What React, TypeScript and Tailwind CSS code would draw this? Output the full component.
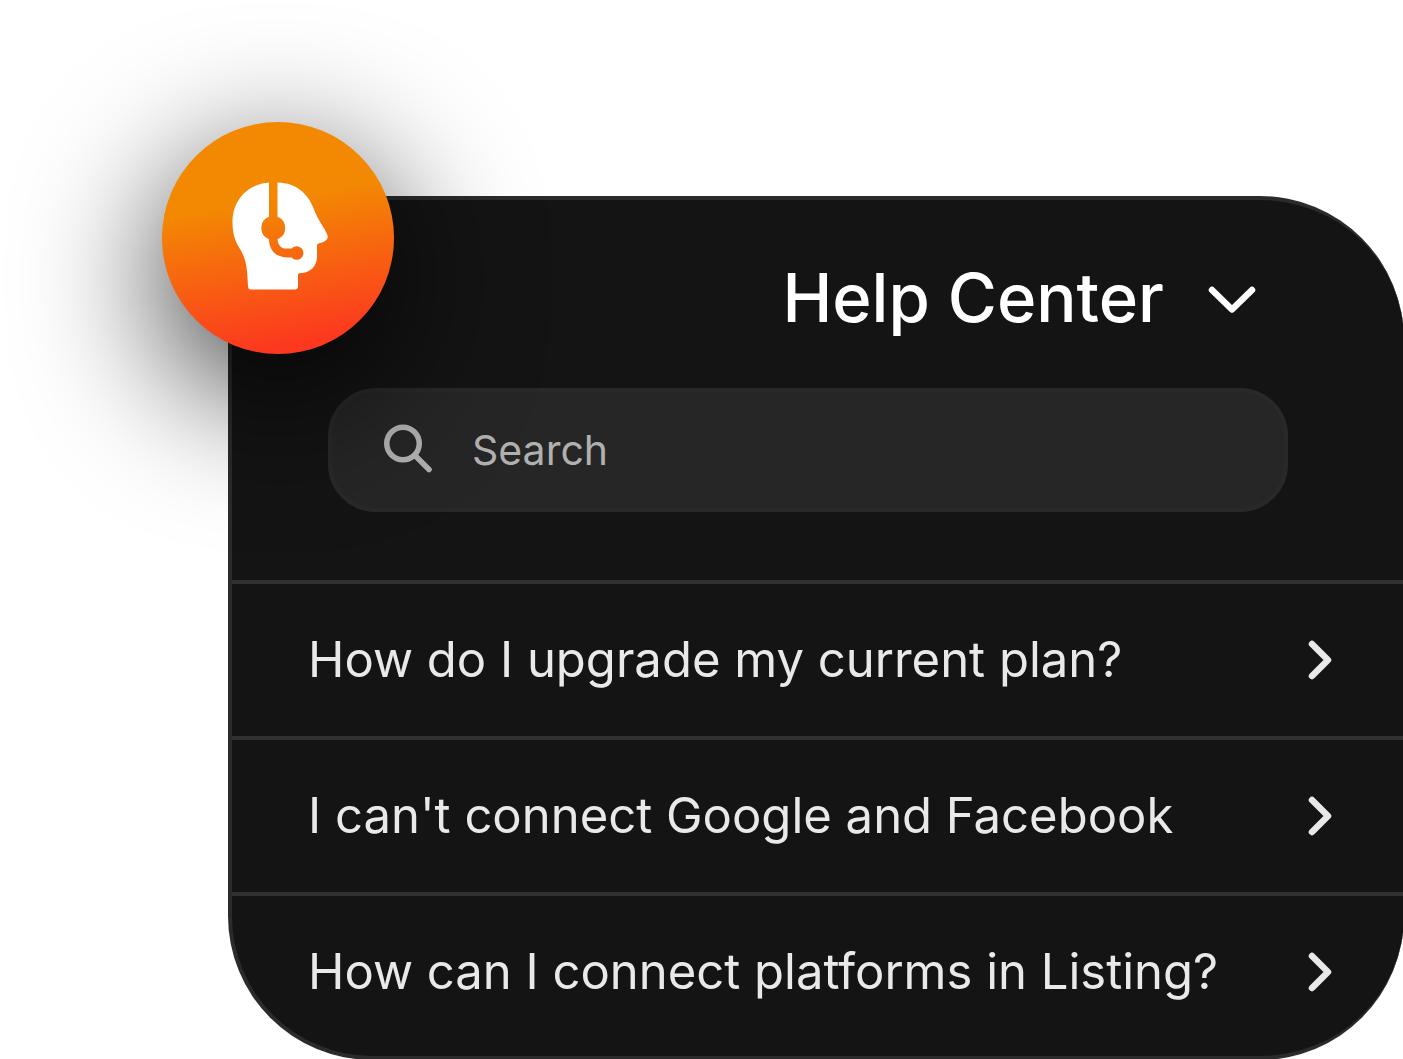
type Question = {
  id: string;
  title: string;
};

const questions: Question[] = [
  { id: "upgrade-plan", title: "How do I upgrade my current plan?" },
  { id: "connect-google", title: "I can't connect Google and Facebook" },
  { id: "connect-listing", title: "How can I connect platforms in Listing?" },
];

// Head in profile with the headset cut out of it.
function SupportIcon() {
  return (
    <svg aria-hidden viewBox="-4 0 100 112" className="relative w-[100px]">
      <path
        fill="white"
        d="M37 .5C16 2 .5 18 .5 40C.5 52 3 59 8 67C14 77 15 84 16 104Q16 107.500 19 107.500H63Q66 107.500 66 104V93Q66 91 69 91C78 91 85 84 85 75V63Q85 61.500 88 61C93 60 97.500 57 95 52C92 45 86 38 83 30C77 12 65 1 45.500 .5V34.800A12 12 0 0 1 45.500 57.200C46 63 49 66.500 54 66.500H59.500A6.800 6.800 0 1 1 59.500 75.500H56C44 75.500 37 68 37 57.200A12 12 0 0 1 37 34.800Z"
      />
    </svg>
  );
}

function SearchIcon() {
  return (
    <svg
      aria-hidden
      viewBox="0 0 48 53"
      fill="none"
      stroke="currentColor"
      strokeWidth="5.500"
      strokeLinecap="round"
      className="w-12 shrink-0"
    >
      <circle cx="19" cy="19.500" r="16.250" />
      <path d="M31.500 32L45 45.500" />
    </svg>
  );
}

function ChevronDown() {
  return (
    <svg
      aria-hidden
      viewBox="0 -4 48 32"
      fill="none"
      stroke="currentColor"
      strokeWidth="6.500"
      strokeLinecap="round"
      strokeLinejoin="round"
      className="w-12 shrink-0"
    >
      <path d="M4 4L24 23.500L44 4" />
    </svg>
  );
}

function ChevronRight() {
  return (
    <svg
      aria-hidden
      viewBox="0 0 24 40"
      fill="none"
      stroke="currentColor"
      strokeWidth="6.500"
      strokeLinecap="round"
      strokeLinejoin="round"
      className="w-6 shrink-0"
    >
      <path d="M4 4L20 20L4 36" />
    </svg>
  );
}

export default function App() {
  return (
    <main className="min-h-screen overflow-hidden bg-white pt-[196px] pl-[228px] font-['Inter',sans-serif]">
      <section className="relative -mr-px rounded-[144px] border-4 border-r-0 border-[#2b2b2b] bg-[#141414]">
        <header className="flex flex-col gap-[42px] pt-[50px] pr-[116px] pb-[68px] pl-24">
          <button
            type="button"
            className="flex items-center gap-11 self-end pr-8 text-[67px] leading-24 font-medium text-white"
          >
            Help Center
            <ChevronDown />
          </button>
          <label className="flex h-[124px] items-center gap-10 rounded-[48px] border-4 border-[#292929] bg-[#262626] px-[52px] text-[#b0b0b0]">
            <SearchIcon />
            <input
              type="search"
              aria-label="Search"
              placeholder="Search"
              className="w-full min-w-0 bg-transparent text-[41px] leading-14 outline-none placeholder:text-[#b0b0b0]"
            />
          </label>
        </header>

        <ul className="pb-2">
          {questions.map((question) => (
            <li key={question.id} className="border-t-4 border-[#303030]">
              <a
                href={`#${question.id}`}
                className="flex h-[152px] items-center justify-between pr-[72px] pl-[76px] text-[49px] text-[#e9e9e9]"
              >
                {question.title}
                <ChevronRight />
              </a>
            </li>
          ))}
        </ul>

        <div className="pointer-events-none absolute -top-[78px] -left-[70px] flex size-[232px] items-center justify-center">
          <div className="absolute inset-0 translate-y-10 rounded-full bg-black/80 blur-[72px]" />
          <div className="absolute inset-0 rounded-full bg-[linear-gradient(170deg,#f38903_35%,#fc381f_90%)]" />
          <SupportIcon />
        </div>
      </section>
    </main>
  );
}
